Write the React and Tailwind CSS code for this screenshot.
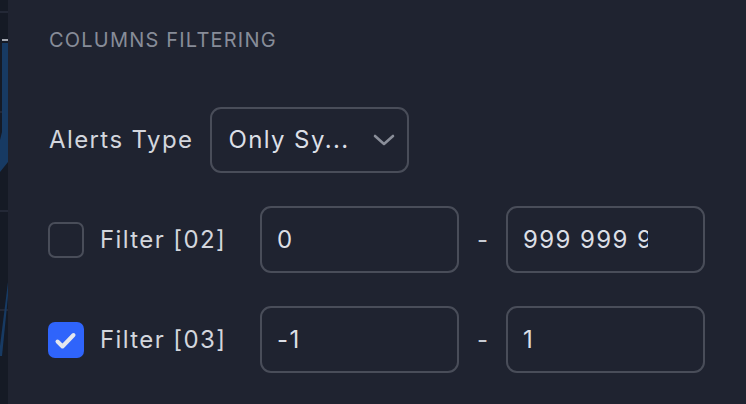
import React from "react";

const font = { fontFamily: "Inter, 'Noto Sans', sans-serif" };

function Checkbox({ checked }) {
  if (checked) {
    return (
      <div className="w-[36px] h-[36px] shrink-0 rounded-[7px] bg-[#2f64fb] flex items-center justify-center">
        <svg width="36" height="36" viewBox="0 0 36 36">
          <path d="M9.5 19.5 L14.5 24.5 L25.5 13" fill="none" stroke="#e4e7ee" strokeWidth="4" strokeLinecap="round" strokeLinejoin="round" />
        </svg>
      </div>
    );
  }
  return <div className="w-[36px] h-[36px] shrink-0 rounded-[7px] border-2 border-[#494d59]" />;
}

function Field({ value }) {
  return (
    <input
      readOnly
      value={value}
      className="w-[199px] h-[67px] shrink-0 rounded-[11px] border-2 border-[#494d59] bg-[#1f2330] pl-[15px] pr-[55px] text-[24px] tracking-[1.4px] text-[#dcdfe6] outline-none"
      style={font}
    />
  );
}

function FilterRow({ checked, label, from, to }) {
  return (
    <div className="flex items-center h-[67px]">
      <div className="ml-[-1px]"><Checkbox checked={checked} /></div>
      <div className="ml-[16px] w-[160px] text-[24px] leading-[30px] tracking-[1.4px] text-[#d3d6dd]">{label}</div>
      <Field value={from} />
      <div className="w-[47px] text-center text-[24px] text-[#c8ccd4]">-</div>
      <Field value={to} />
    </div>
  );
}

export default function App() {
  return (
    <div className="w-[746px] h-[404px] flex overflow-hidden bg-[#1f2330]" style={font}>
      <div className="w-[8px] h-full shrink-0 bg-[#151a25]">
        <svg width="8" height="404" viewBox="0 0 8 404">
          <rect x="0" y="11" width="8" height="2" fill="#232836" />
          <rect x="0" y="111" width="8" height="2" fill="#232836" />
          <rect x="0" y="210" width="8" height="2" fill="#232836" />
          <rect x="0" y="309" width="8" height="2" fill="#232836" />
          <path d="M2 43 L8 43 L8 162 L0 172 L0 140 L2 132 Z" fill="#173a63" />
          <path d="M8 282 L8 296 L2 356 L0 356 L0 346 Z" fill="#173a63" />
          <rect x="2" y="39" width="6" height="2" fill="#a3a7b0" />
        </svg>
      </div>
      <div className="flex-1 flex flex-col pl-[41px] pt-[26px]">
        <div className="text-[20px] leading-[28px] tracking-[1.2px] text-[#878c98]">COLUMNS FILTERING</div>
        <div className="mt-[53px] flex items-center h-[66px]">
          <div className="text-[24px] leading-[30px] tracking-[1.4px] text-[#d3d6dd]">Alerts Type</div>
          <div className="ml-[17px] w-[199px] h-[66px] rounded-[11px] border-2 border-[#494d59] flex items-center pl-[16px] pr-[12px]">
            <span className="flex-1 text-[24px] tracking-[1.4px] text-[#dcdfe6]">Only Sy...</span>
            <svg width="22" height="12" viewBox="0 0 22 12">
              <path d="M2 2 L11 10 L20 2" fill="none" stroke="#8a8e99" strokeWidth="2.6" strokeLinecap="round" strokeLinejoin="round" />
            </svg>
          </div>
        </div>
        <div className="mt-[33px]">
          <FilterRow checked={false} label="Filter [02]" from="0" to="999 999 999" />
        </div>
        <div className="mt-[33px]">
          <FilterRow checked={true} label="Filter [03]" from="-1" to="1" />
        </div>
      </div>
    </div>
  );
}
